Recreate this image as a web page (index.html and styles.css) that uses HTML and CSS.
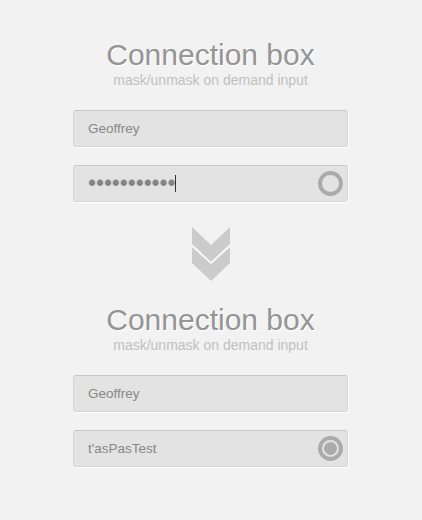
FILE: index.html
```html
<!DOCTYPE html>
<html lang="en">
<head>
    <meta charset="UTF-8">
    <meta name="viewport" content="width=device-width, initial-scale=1.0">
    <title>Connection box</title>
    <link rel="stylesheet" href="styles.css">
</head>
<body>
    <div class="box">
        <h1>Connection box</h1>
        <p class="subtitle">mask/unmask on demand input</p>
        <div class="field">
            <span class="value">Geoffrey</span>
        </div>
        <div class="field">
            <span class="value masked">•••••••••••</span>
            <span class="caret"></span>
            <span class="toggle"></span>
        </div>
    </div>

    <div class="arrow">
        <svg width="38" height="55" viewBox="0 0 38 55">
            <polygon points="0,0 19,18 38,0 38,17 19,35 0,17" fill="#cbcbcb"/>
            <polygon points="0,20 19,37 38,20 38,36 19,54 0,36" fill="#cbcbcb"/>
            <polyline points="0,18.5 19,36 38,18.5" fill="none" stroke="#fafafa" stroke-width="1.5"/>
        </svg>
    </div>

    <div class="box">
        <h1>Connection box</h1>
        <p class="subtitle">mask/unmask on demand input</p>
        <div class="field">
            <span class="value">Geoffrey</span>
        </div>
        <div class="field">
            <span class="value">t'asPasTest</span>
            <span class="toggle on"></span>
        </div>
    </div>
</body>
</html>
```
FILE: styles.css
```css
body {
    font-family: "Liberation Sans", Arial, sans-serif;
    margin: 0;
    padding-top: 40px;
    background-color: #f2f2f2;
}

.box {
    width: 275px;
    margin-left: 73px;
}

h1 {
    margin: 0;
    font-size: 30px;
    line-height: 30px;
    font-weight: normal;
    text-align: center;
    color: #959595;
    text-shadow: 1px 1px 0 #fff;
}

.subtitle {
    margin: 2px 0 22px;
    font-size: 14px;
    line-height: 16px;
    text-align: center;
    color: #c0c0c0;
}

.field {
    display: flex;
    align-items: center;
    box-sizing: border-box;
    height: 37px;
    margin-bottom: 18px;
    padding: 0 4px 0 14px;
    background: #e3e3e3;
    border: 1px solid #d6d6d6;
    border-top-color: #c9c9c9;
    border-radius: 3px;
    box-shadow: 1px 1px 0 #fff;
    font-size: 13.5px;
    color: #888;
}

.value {
    flex: none;
}

.masked {
    font-size: 23px;
    letter-spacing: -0.1px;
    color: #858585;
}

.caret {
    width: 1px;
    height: 17px;
    background: #333;
}

.toggle {
    box-sizing: border-box;
    width: 25px;
    height: 25px;
    margin-left: auto;
    border: 4px solid #ababab;
    border-radius: 50%;
    display: flex;
    align-items: center;
    justify-content: center;
}

.toggle.on::after {
    content: "";
    width: 13px;
    height: 13px;
    border-radius: 50%;
    background: #ababab;
}

.arrow {
    height: 103px;
    margin-top: -18px;
    box-sizing: border-box;
    padding-top: 25px;
    text-align: center;
}

.arrow svg {
    display: block;
    margin-left: 192px;
}
```
